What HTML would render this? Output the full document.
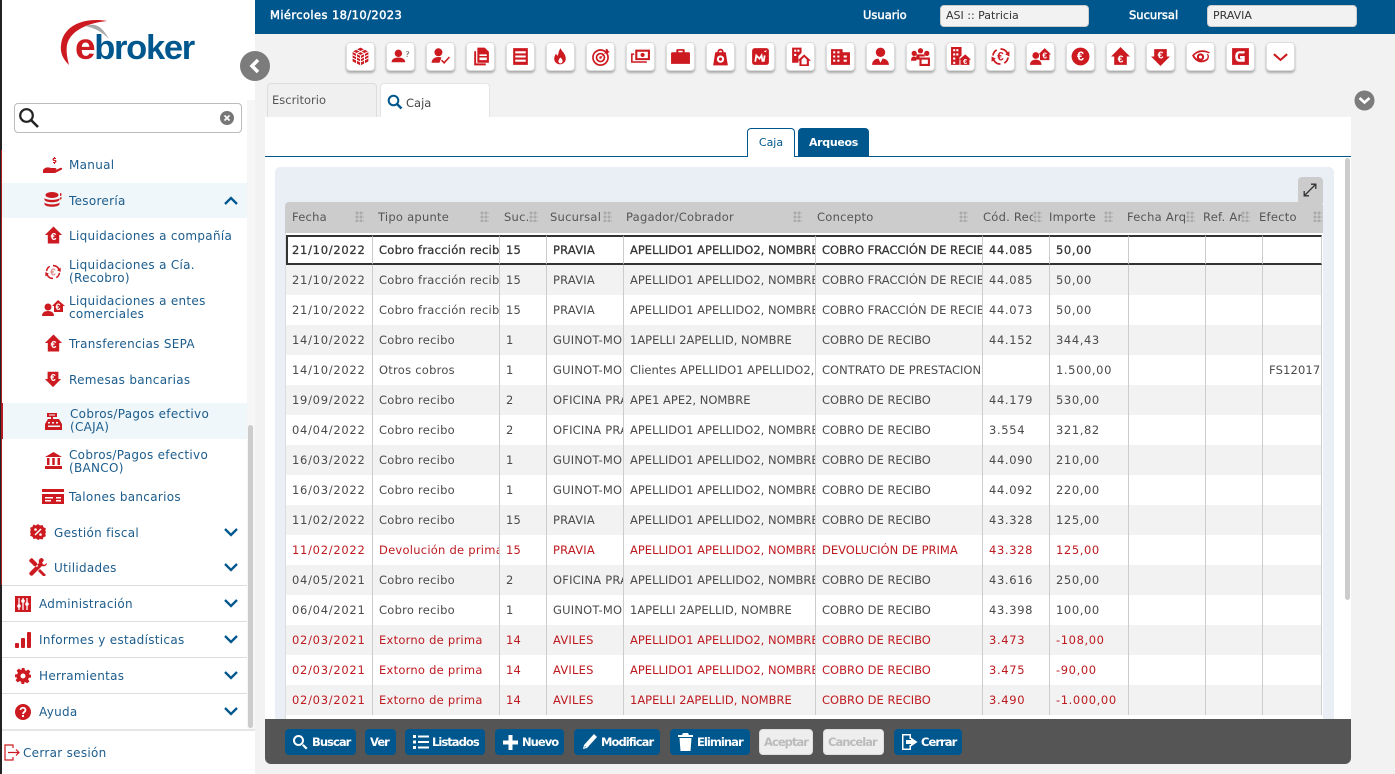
<!DOCTYPE html>
<html lang="es"><head><meta charset="utf-8"><title>Caja</title>
<style>
*{box-sizing:border-box}
html,body{margin:0;padding:0;width:1395px;height:774px;overflow:hidden;background:#f2f2f2;font-family:"DejaVu Sans","Liberation Sans",sans-serif;font-size:11.5px;color:#444}
.a{position:absolute}
#side{left:0;top:0;width:255px;height:774px;background:#fff;border-left:2px solid #222}
.m{position:absolute;color:#1c5c8c;font-size:12px;line-height:13px;white-space:nowrap;margin-top:1px;letter-spacing:.3px}
.ic{position:absolute}
.chev{position:absolute;left:224px;width:14px;height:9px}
.sep{position:absolute;left:2px;width:245px;height:1px;background:#ddd}
.tb{position:absolute;top:42px;width:29px;height:29px;background:#fff;border:1px solid #ddd;border-radius:4px;box-shadow:0 2px 2px #aaa}
.tb svg{position:absolute;left:3px;top:3px;width:21px;height:21px;fill:#cc1a20}
.eu{font:bold 10px "Liberation Sans",sans-serif;fill:#fff;text-anchor:middle}
.hd{position:absolute;top:210px;font-size:11.5px;color:#555;white-space:nowrap;overflow:hidden;line-height:14px;letter-spacing:.25px}
.gr{position:absolute;top:211px;width:9px;height:11px;background-image:radial-gradient(#aaa 0 1.4px,transparent 1.6px);background-size:4px 4px}
table{position:absolute;left:286px;top:235px;width:1036px;border-collapse:separate;border-spacing:0;table-layout:fixed}
td{height:30px;padding:0 0 0 6px;white-space:nowrap;overflow:hidden;border-right:1px solid #ccc;font-size:11.5px;color:#4a4a4a;letter-spacing:.15px}
td:nth-child(1){letter-spacing:.72px}
td:nth-child(2){letter-spacing:.25px}
td:nth-child(4){letter-spacing:.2px}
td:nth-child(7){letter-spacing:.65px}
td:nth-child(8){letter-spacing:.6px}
td:nth-child(5),td:nth-child(6){letter-spacing:0}
tr:nth-child(even) td{background:#f2f2f2}
tr:nth-child(odd) td{background:#fff}
tr.r td{color:#bd1a20}
tr.s td{color:#333;border-top:2px solid #333;border-bottom:2px solid #333;background:#fff;-webkit-text-stroke:.25px #333}
.btn{position:absolute;top:729px;height:26px;background:#00578e;border-radius:4px;color:#fff;font-size:11.5px;font-weight:bold;line-height:26px;white-space:nowrap;letter-spacing:-.95px}
.btn svg{position:absolute;fill:#fff}
.btn span{position:absolute;top:0}
.dis{background:#eee;color:#bbb;border:1px solid #ddd;line-height:24px}
</style></head><body>

<div class="a" style="left:255px;top:0;width:1140px;height:34px;background:#00578e"></div>
<div class="a" style="left:270px;top:8px;color:#fff;font-size:11.5px;letter-spacing:.4px;-webkit-text-stroke:.45px #fff">Miércoles 18/10/2023</div>
<div class="a" style="left:863px;top:8px;color:#fff;font-size:11.5px;-webkit-text-stroke:.45px #fff">Usuario</div>
<div class="a" style="left:940px;top:5px;width:149px;height:22px;background:#f2f2f2;border:1px solid #ccc;border-radius:4px;padding:3px 0 0 5px;font-size:11px;color:#333">ASI :: Patricia</div>
<div class="a" style="left:1129px;top:8px;color:#fff;font-size:11.5px;-webkit-text-stroke:.45px #fff">Sucursal</div>
<div class="a" style="left:1207px;top:5px;width:150px;height:22px;background:#f2f2f2;border:1px solid #ccc;border-radius:4px;padding:3px 0 0 5px;font-size:11px;color:#333">PRAVIA</div>

<!-- toolbar -->
<div class="tb" style="left:346px"><svg viewBox="0 0 20 20"><path d="M10 1.500l7.500 3.800v9.400L10 18.500l-7.500-3.800V5.300z"/><path d="M2.500 5.300L10 9l7.500-3.700M10 9v9.500M6.200 3.400L13.800 7.200M13.800 3.400L6.200 7.200M2.500 8.400L10 12.200l7.500-3.800M2.500 11.500L10 15.300l7.500-3.800M6.200 7.200v9.400M13.800 7.200v9.400" fill="none" stroke="#fff" stroke-width=".9"/></svg></div>
<div class="tb" style="left:386px"><svg viewBox="0 0 20 20"><circle cx="8" cy="7" r="3.500"/><path d="M1.500 15.500c0-3 3-4.500 6.500-4.500s6.500 1.500 6.500 4.500z"/><path d="M15 6c.3-1.600 3.300-1.500 3.300.2 0 1.300-1.500 1.200-1.500 2.600h-1c0-1.800 1.500-1.800 1.500-2.700 0-.8-1.300-.8-1.400 0zM15.800 9.500h1v1h-1z" fill="#777"/></svg></div>
<div class="tb" style="left:426px"><svg viewBox="0 0 20 20"><circle cx="8" cy="6" r="3.800"/><path d="M1.500 16c0-3.500 3-5.500 6.500-5.500 1 0 2 .2 3 .5L9 16z"/><path d="M11 13.500l2.500 2.500 5-5.500" fill="none" stroke="#cc1a20" stroke-width="1.500"/></svg></div>
<div class="tb" style="left:466px"><svg viewBox="0 0 20 20"><path d="M7 1.500h7l4 4V16H7zM9 8v1.500h7V8zm0 3v2.500h7V11z" fill-rule="evenodd"/><path d="M4 5h1.800v11.500H15V18.500H4z"/></svg></div>
<div class="tb" style="left:506px"><svg viewBox="0 0 20 20"><path d="M3 2h14v16H3zm2 3v2h10V5zm0 4v2h10V9zm0 4v2h10v-2z" fill-rule="evenodd"/></svg></div>
<div class="tb" style="left:546px"><svg viewBox="0 0 20 20"><path d="M10 2c1 3 5 5 5 10a5.500 5.500 0 0 1-11 0c0-2 1-4 2-5 0 2 1 2 1.500 2C8 7 8.500 4 10 2zm0 9c-1 1-2 2-2 3.500a2 2 0 0 0 4 0c0-1.500-1-2.500-2-3.500z" fill-rule="evenodd"/></svg></div>
<div class="tb" style="left:586px"><svg viewBox="0 0 20 20"><circle cx="10" cy="11" r="7.200" fill="none" stroke="#cc1a20" stroke-width="1.600"/><circle cx="10" cy="11" r="3.800" fill="none" stroke="#cc1a20" stroke-width="1.600"/><circle cx="10" cy="11" r="1.200"/><path d="M10 11l5-5.500V2.500l2 1 .5 1.500 1.500.5-2.500 1.500-2.800.3-3 4z"/></svg></div>
<div class="tb" style="left:626px"><svg viewBox="0 0 20 20"><path d="M5 3.500h14v10H5zm2 2v6h10v-6zm5 1a2 2 0 1 1 0 4 2 2 0 0 1 0-4z" fill-rule="evenodd"/><path d="M1 7h3v1.500H2.500v6H16V16H1z"/></svg></div>
<div class="tb" style="left:666px"><svg viewBox="0 0 20 20"><path d="M7 3h6a1 1 0 0 1 1 1v2h4a1 1 0 0 1 1 1v10H1V7a1 1 0 0 1 1-1h4V4a1 1 0 0 1 1-1zm1 1.500V6h4V4.500z" fill-rule="evenodd"/></svg></div>
<div class="tb" style="left:706px"><svg viewBox="0 0 20 20"><path d="M5 6h2c0-4.500 6-4.500 6 0h2l2 12.500H3zm3.500 0h3c0-2.300-3-2.300-3 0zm1.500 3a3.500 3.500 0 1 0 0 7 3.500 3.500 0 0 0 0-7zm0 2a1.500 1.500 0 1 1 0 3 1.500 1.500 0 0 1 0-3z" fill-rule="evenodd"/></svg></div>
<div class="tb" style="left:746px"><svg viewBox="0 0 20 20"><rect x="2" y="2" width="16" height="16" rx="2.500"/><path d="M5 15l1-6 3 3 2-3 1 6M13 15l1-6" fill="none" stroke="#fff" stroke-width="1.700"/><path d="M13 5l3-1-1 2z" fill="#fff"/></svg></div>
<div class="tb" style="left:786px"><svg viewBox="0 0 20 20"><path d="M2 1.500h9v5l-3 3v6.500H2zm2 2v2h2v-2zm3 0v2h2v-2zm-3 4v2h2v-2z" fill-rule="evenodd"/><path d="M13.500 8L20 14h-2v5H9v-5H7zm0 2.500L11 13v4.500h5V13z" fill-rule="evenodd"/></svg></div>
<div class="tb" style="left:826px"><svg viewBox="0 0 20 20"><path d="M1 3h11v3h7v12H1zm2 2v2h2V5zm4 0v2h2V5zM3 9v2h2V9zm4 0v2h2V9zm6 0v2h3V9zM3 13v2h2v-2zm4 0v2h2v-2zm6 0v2h3v-2z" fill-rule="evenodd"/></svg></div>
<div class="tb" style="left:866px"><svg viewBox="0 0 20 20"><circle cx="10" cy="6" r="4.500"/><path d="M2 18c0-4 3-6 6-6l2 4 2-4c3 0 6 2 6 6z"/></svg></div>
<div class="tb" style="left:906px"><svg viewBox="0 0 20 20"><circle cx="4" cy="7" r="2.500"/><circle cx="10" cy="4.500" r="2.500"/><circle cx="16" cy="7" r="2.500"/><path d="M1 14c0-3 1-4 3-4 1 0 2 1 2 1v3zM6 8h8v2H9v3H6zM9 11h10v8H9zm2 2v4h6v-4z" fill-rule="evenodd"/></svg></div>
<div class="tb" style="left:946px"><svg viewBox="0 0 20 20"><path d="M1 1h10v8l-2 2v7H1zm2 2v2h2V3zm3 0v2h2V3zM3 7v2h2V7zm3 0v2h2V7zm-3 4v2h2v-2zm0 4v2h2v-2z" fill-rule="evenodd"/><path d="M14.500 8L20 13h-1.500v5H10v-5H8.500z"/><text class="eu" x="14.500" y="17" style="font-size:7px">€</text></svg></div>
<div class="tb" style="left:986px"><svg viewBox="0 0 20 20"><path d="M10 2a8 8 0 0 1 7 4l1.500-1v5l-4-2 1.200-.8A6.300 6.300 0 0 0 10 3.700zM10 18a8 8 0 0 1-7-4l-1.500 1v-5l4 2-1.200.8A6.300 6.300 0 0 0 10 16.300zM2 9a8 8 0 0 1 4-6l.8 1.400A6.300 6.300 0 0 0 3.700 9zM18 11a8 8 0 0 1-4 6l-.8-1.400a6.300 6.300 0 0 0 3.100-4.600z"/><text class="eu" x="10" y="14" style="fill:#cc1a20;font-size:11px">€</text></svg></div>
<div class="tb" style="left:1026px"><svg viewBox="0 0 20 20"><circle cx="5.500" cy="9" r="3.200"/><path d="M0 18c0-3 2-5 5.500-5s5.500 2 5.500 5z"/><path d="M14 2l6 6h-1.500v5.500h-9V8H8z"/><text class="eu" x="14" y="12" style="font-size:8px">€</text></svg></div>
<div class="tb" style="left:1066px"><svg viewBox="0 0 20 20"><circle cx="10" cy="10" r="8.500"/><text class="eu" x="10" y="14" style="font-size:12px">€</text></svg></div>
<div class="tb" style="left:1106px"><svg viewBox="0 0 20 20"><path d="M10 1l9 9h-3v8H4v-8H1z"/><text class="eu" x="10" y="15.500" style="font-size:10px">€</text></svg></div>
<div class="tb" style="left:1146px"><svg viewBox="0 0 20 20"><path d="M10 19l-9-9h3V3h12v7h3z"/><text class="eu" x="10" y="12" style="font-size:10px">€</text></svg></div>
<div class="tb" style="left:1186px"><svg viewBox="0 0 20 20"><path d="M2 9c5-6 11-6 17-3l-1 1C13 5 8 5 4 9c3 5 8 6 12 3 1-1 1-3 0-4l1-.5c2 2 1 6-2 7C10 17 5 15 2 9z"/><path d="M10 7a3.500 3.500 0 1 0 0 7 3.500 3.500 0 0 0 0-7zm0 2a1.500 1.500 0 1 1 0 3 1.500 1.500 0 0 1 0-3z" fill-rule="evenodd"/></svg></div>
<div class="tb" style="left:1226px"><svg viewBox="0 0 20 20"><path d="M2 2h16v16H2zm12 4.500V5H9C6 5 5 7.500 5 10s1 5 4 5h5V9.500H9.500V12h1.700v.500H9c-1.200 0-1.500-1.300-1.500-2.500S7.800 7 9 7h3v.5z" fill-rule="evenodd"/></svg></div>
<div class="tb" style="left:1266px"><svg viewBox="0 0 20 20"><path d="M4.500 7L10 12l5.500-5 1.500 1.500-7 6-7-6z"/></svg></div>

<!-- tabs -->
<div class="a" style="left:267px;top:83px;width:110px;height:35px;background:#f0f0f0;border:1px solid #ddd;border-bottom:0;border-radius:4px 4px 0 0;padding:9px 0 0 4px;color:#555">Escritorio</div>
<div class="a" style="left:380px;top:83px;width:110px;height:35px;background:#fff;border:1px solid #e4e4e4;border-bottom:0;border-radius:4px 4px 0 0;padding:12px 0 0 25px;color:#444">Caja</div>
<svg class="a" style="left:387px;top:94px" width="16" height="16" viewBox="0 0 16 16"><circle cx="6.500" cy="6.500" r="4.800" fill="none" stroke="#00578e" stroke-width="2"/><path d="M10 10l4.500 4.500" stroke="#00578e" stroke-width="2.500"/></svg>
<svg class="a" style="left:1354px;top:90px" width="21" height="21" viewBox="0 0 21 21"><circle cx="10.500" cy="10.500" r="10" fill="#7c7c7c"/><path d="M5.500 8l5 4.500 5-4.500" fill="none" stroke="#fff" stroke-width="2.600"/></svg>

<!-- content -->
<div class="a" style="left:265px;top:117px;width:1086px;height:604px;background:#fff"></div>
<div class="a" style="left:265px;top:156px;width:1086px;height:1px;background:#00578e"></div>
<div class="a" style="left:747px;top:128px;width:48px;height:29px;background:#fff;border:1px solid #00578e;border-bottom:0;border-radius:4px 4px 0 0;text-align:center;line-height:27px;color:#00578e;font-size:11px">Caja</div>
<div class="a" style="left:798px;top:128px;width:71px;height:28px;background:#00578e;border-radius:4px 4px 0 0;text-align:center;line-height:29px;color:#fff;font-size:11px;font-weight:bold;letter-spacing:-.3px">Arqueos</div>
<div class="a" style="left:1345px;top:158px;width:5px;height:442px;background:#ccc;border-radius:3px"></div>
<div class="a" style="left:275px;top:167px;width:1059px;height:552px;background:#e9eff4;border-radius:5px 5px 0 0"></div>
<div class="a" style="left:1298px;top:177px;width:25px;height:26px;background:#ccc;border-radius:4px 4px 0 0"></div>
<svg class="a" style="left:1303px;top:183px" width="14" height="14" viewBox="0 0 14 14" fill="none" stroke="#333" stroke-width="1.300"><path d="M1.500 12.500l11-11M8 1.200h4.800V6M1.200 8v4.800H6"/></svg>
<div class="a" style="left:285px;top:202px;width:1038px;height:31px;background:#ccc;border-radius:4px 4px 0 0"></div>
<div class="a" style="left:285px;top:233px;width:1038px;height:486px;background:#fff"></div>

<div class="hd" style="left:292px">Fecha</div><div class="gr" style="left:355px"></div>
<div class="hd" style="left:378px">Tipo apunte</div><div class="gr" style="left:480px"></div>
<div class="hd" style="left:504px;width:25px">Suc.</div><div class="gr" style="left:529px"></div>
<div class="hd" style="left:550px;width:50px">Sucursal</div><div class="gr" style="left:603px"></div>
<div class="hd" style="left:626px">Pagador/Cobrador</div><div class="gr" style="left:793px"></div>
<div class="hd" style="left:817px">Concepto</div><div class="gr" style="left:959px"></div>
<div class="hd" style="left:983px;width:50px">Cód. Rec</div><div class="gr" style="left:1033px"></div>
<div class="hd" style="left:1049px">Importe</div><div class="gr" style="left:1104px"></div>
<div class="hd" style="left:1127px;width:59px">Fecha Arq</div><div class="gr" style="left:1186px"></div>
<div class="hd" style="left:1203px;width:39px">Ref. Ar</div><div class="gr" style="left:1241px"></div>
<div class="hd" style="left:1259px">Efecto</div><div class="gr" style="left:1313px"></div>

<table>
<colgroup><col style="width:87px"><col style="width:127px"><col style="width:47px"><col style="width:77px"><col style="width:192px"><col style="width:167px"><col style="width:67px"><col style="width:79px"><col style="width:77px"><col style="width:57px"><col style="width:59px"></colgroup>
<tr class="s"><td>21/10/2022</td><td>Cobro fracción recibo</td><td>15</td><td>PRAVIA</td><td>APELLIDO1 APELLIDO2, NOMBRE</td><td>COBRO FRACCIÓN DE RECIBO</td><td>44.085</td><td>50,00</td><td></td><td></td><td></td></tr>
<tr><td>21/10/2022</td><td>Cobro fracción recibo</td><td>15</td><td>PRAVIA</td><td>APELLIDO1 APELLIDO2, NOMBRE</td><td>COBRO FRACCIÓN DE RECIBO</td><td>44.085</td><td>50,00</td><td></td><td></td><td></td></tr>
<tr><td>21/10/2022</td><td>Cobro fracción recibo</td><td>15</td><td>PRAVIA</td><td>APELLIDO1 APELLIDO2, NOMBRE</td><td>COBRO FRACCIÓN DE RECIBO</td><td>44.073</td><td>50,00</td><td></td><td></td><td></td></tr>
<tr><td>14/10/2022</td><td>Cobro recibo</td><td>1</td><td>GUINOT-MO</td><td>1APELLI 2APELLID, NOMBRE</td><td>COBRO DE RECIBO</td><td>44.152</td><td>344,43</td><td></td><td></td><td></td></tr>
<tr><td>14/10/2022</td><td>Otros cobros</td><td>1</td><td>GUINOT-MO</td><td>Clientes APELLIDO1 APELLIDO2, NOMBRE</td><td>CONTRATO DE PRESTACION</td><td></td><td>1.500,00</td><td></td><td></td><td>FS12017</td></tr>
<tr><td>19/09/2022</td><td>Cobro recibo</td><td>2</td><td>OFICINA PRAVIA</td><td>APE1 APE2, NOMBRE</td><td>COBRO DE RECIBO</td><td>44.179</td><td>530,00</td><td></td><td></td><td></td></tr>
<tr><td>04/04/2022</td><td>Cobro recibo</td><td>2</td><td>OFICINA PRAVIA</td><td>APELLIDO1 APELLIDO2, NOMBRE</td><td>COBRO DE RECIBO</td><td>3.554</td><td>321,82</td><td></td><td></td><td></td></tr>
<tr><td>16/03/2022</td><td>Cobro recibo</td><td>1</td><td>GUINOT-MO</td><td>APELLIDO1 APELLIDO2, NOMBRE</td><td>COBRO DE RECIBO</td><td>44.090</td><td>210,00</td><td></td><td></td><td></td></tr>
<tr><td>16/03/2022</td><td>Cobro recibo</td><td>1</td><td>GUINOT-MO</td><td>APELLIDO1 APELLIDO2, NOMBRE</td><td>COBRO DE RECIBO</td><td>44.092</td><td>220,00</td><td></td><td></td><td></td></tr>
<tr><td>11/02/2022</td><td>Cobro recibo</td><td>15</td><td>PRAVIA</td><td>APELLIDO1 APELLIDO2, NOMBRE</td><td>COBRO DE RECIBO</td><td>43.328</td><td>125,00</td><td></td><td></td><td></td></tr>
<tr class="r"><td>11/02/2022</td><td>Devolución de prima</td><td>15</td><td>PRAVIA</td><td>APELLIDO1 APELLIDO2, NOMBRE</td><td>DEVOLUCIÓN DE PRIMA</td><td>43.328</td><td>125,00</td><td></td><td></td><td></td></tr>
<tr><td>04/05/2021</td><td>Cobro recibo</td><td>2</td><td>OFICINA PRAVIA</td><td>APELLIDO1 APELLIDO2, NOMBRE</td><td>COBRO DE RECIBO</td><td>43.616</td><td>250,00</td><td></td><td></td><td></td></tr>
<tr><td>06/04/2021</td><td>Cobro recibo</td><td>1</td><td>GUINOT-MO</td><td>1APELLI 2APELLID, NOMBRE</td><td>COBRO DE RECIBO</td><td>43.398</td><td>100,00</td><td></td><td></td><td></td></tr>
<tr class="r"><td>02/03/2021</td><td>Extorno de prima</td><td>14</td><td>AVILES</td><td>APELLIDO1 APELLIDO2, NOMBRE</td><td>COBRO DE RECIBO</td><td>3.473</td><td>-108,00</td><td></td><td></td><td></td></tr>
<tr class="r"><td>02/03/2021</td><td>Extorno de prima</td><td>14</td><td>AVILES</td><td>APELLIDO1 APELLIDO2, NOMBRE</td><td>COBRO DE RECIBO</td><td>3.475</td><td>-90,00</td><td></td><td></td><td></td></tr>
<tr class="r"><td>02/03/2021</td><td>Extorno de prima</td><td>14</td><td>AVILES</td><td>1APELLI 2APELLID, NOMBRE</td><td>COBRO DE RECIBO</td><td>3.490</td><td>-1.000,00</td><td></td><td></td><td></td></tr>
</table>
<div class="a" style="left:286px;top:235px;width:2px;height:30px;background:#333"></div>
<div class="a" style="left:285px;top:233px;width:1px;height:486px;background:#ddd"></div>

<!-- bottom bar -->
<div class="a" style="left:265px;top:719px;width:1086px;height:45px;background:#555;border-radius:0 0 6px 6px"></div>
<div class="btn" style="left:285px;width:71px"><svg style="left:7px;top:5px" width="16" height="16" viewBox="0 0 16 16"><path d="M6.500 1a5.500 5.500 0 1 1 0 11 5.500 5.500 0 0 1 0-11zm0 2a3.500 3.500 0 1 0 0 7 3.500 3.500 0 0 0 0-7z" fill-rule="evenodd"/><path d="M10 11.500l1.500-1.500 4 4-1.500 1.500z"/></svg><span style="left:27px">Buscar</span></div>
<div class="btn" style="left:365px;width:31px"><span style="left:5px">Ver</span></div>
<div class="btn" style="left:405px;width:80px"><svg style="left:8px;top:6px" width="16" height="14" viewBox="0 0 16 14"><path d="M0 0h3v3H0zM0 5.500h3v3H0zM0 11h3v3H0zM5 .500h11v2H5zM5 6h11v2H5zM5 11.500h11v2H5z"/></svg><span style="left:27px">Listados</span></div>
<div class="btn" style="left:495px;width:69px"><svg style="left:8px;top:6px" width="15" height="15" viewBox="0 0 15 15"><path d="M5.500 0h4v5.500H15v4H9.500V15h-4V9.500H0v-4h5.500z"/></svg><span style="left:27px">Nuevo</span></div>
<div class="btn" style="left:574px;width:86px"><svg style="left:7px;top:4px" width="17" height="18" viewBox="0 0 17 18"><path d="M13 1l3 3-10 11-4 1 1-4zM4 13l-.6 1.600L5 14z"/></svg><span style="left:27px">Modificar</span></div>
<div class="btn" style="left:670px;width:80px"><svg style="left:8px;top:4px" width="15" height="18" viewBox="0 0 15 18"><path d="M5 0h5l1 2h4v2H0V2h4zM1.500 5h12l-1 13h-10z"/></svg><span style="left:27px">Eliminar</span></div>
<div class="btn dis" style="left:759px;width:54px"><span style="left:4px">Aceptar</span></div>
<div class="btn dis" style="left:823px;width:61px"><span style="left:4px">Cancelar</span></div>
<div class="btn" style="left:894px;width:68px"><svg style="left:8px;top:5px" width="16" height="16" viewBox="0 0 16 16"><path d="M0 0h9v5H7.500V1.500h-6v13h6V11H9v5H0z"/><path d="M9 3.500L15.500 8 9 12.500V10H4V6h5z"/></svg><span style="left:27px">Cerrar</span></div>

<!-- sidebar -->
<div id="side" class="a"></div>
<div class="a" style="left:247px;top:100px;width:8px;height:630px;background:#f6f6f6"></div>
<div class="a" style="left:248px;top:425px;width:5px;height:303px;background:#ccc;border-radius:3px"></div>
<div class="a" style="left:1px;top:150px;width:1px;height:435px;background:#b01c22"></div>

<svg class="a" style="left:55px;top:15px" width="60" height="55" viewBox="0 0 60 55"><path d="M52 6C30 2 8 10 6 30c-1 8 2 14 8 20-2-8-3-14-2-20C15 16 32 8 52 6z" fill="#cc1a20"/><path d="M30 11c10-3 16-1 24 13-7-7-14-11-24-13z" fill="#a9a9a9"/></svg>
<div class="a" style="left:75px;top:26px;font-family:'Liberation Sans',sans-serif;font-weight:bold;font-size:34.500px;letter-spacing:-1.300px;line-height:42px;color:#00578e"><span style="color:#cc1a20;font-size:37px">e</span>broker</div>

<div class="a" style="left:14px;top:103px;width:228px;height:30px;background:#fff;border:1px solid #bbb;border-radius:4px"></div>
<svg class="a" style="left:18px;top:107px" width="22" height="22" viewBox="0 0 22 22"><circle cx="8.500" cy="8.500" r="6.300" fill="none" stroke="#222" stroke-width="2.200"/><path d="M13 13l7 7" stroke="#222" stroke-width="2.600"/></svg>
<svg class="a" style="left:220px;top:111px" width="14" height="14" viewBox="0 0 14 14"><circle cx="7" cy="7" r="7" fill="#777"/><path d="M4.500 4.500l5 5m0-5l-5 5" stroke="#fff" stroke-width="1.600"/></svg>

<div class="a" style="left:2px;top:183px;width:245px;height:35px;background:#eff7fb"></div>
<div class="a" style="left:2px;top:403px;width:245px;height:36px;background:#eff7fb"></div>
<div class="a" style="left:2px;top:403px;width:1px;height:36px;background:#b01c22"></div>

<svg class="ic" style="left:43px;top:156px" width="20" height="18" viewBox="0 0 20 18" fill="#cc1a20"><path d="M0 14c2-3 5-3 8-2h4c2 0 2 2 0 2H9h4l4-2c2-1 3 1 1 2l-6 3H0z"/><path d="M11 1v1c-2 0-2 3 0 3s1 1 0 1l-1 0v1h1v1h1V7c2-1 2-3 0-3s-1-1 0-1h1V2h-1V1z"/></svg>
<div class="m" style="left:69px;top:158px">Manual</div>
<svg class="ic" style="left:44px;top:191px" width="18" height="18" viewBox="0 0 18 18" fill="#cc1a20"><ellipse cx="8" cy="4" rx="6.500" ry="3"/><path d="M.5 7c2 2.500 13 2.500 15 0v2c-2 3-13 3-15 0zM.5 11.500c2 2.500 13 2.500 15 0v2c-2 3-13 3-15 0z"/><path d="M16 2l1.500.5v2L16 5zM16 6.500l1.500-.5v2l-1.500.7z"/></svg>
<div class="m" style="left:69px;top:194px">Tesorería</div>
<svg class="chev" style="top:196px" viewBox="0 0 14 9"><path d="M1 8l6-6 6 6" fill="none" stroke="#00578e" stroke-width="2.300"/></svg>

<svg class="ic" style="left:44px;top:225px" width="19" height="20" viewBox="0 0 20 20" fill="#cc1a20"><path d="M10 1l9 9h-3v9H4v-9H1z"/><text class="eu" x="10" y="15.500" style="font-size:11px">€</text></svg>
<div class="m" style="left:69px;top:229px">Liquidaciones a compañía</div>
<svg class="ic" style="left:44px;top:263px" width="18" height="18" viewBox="0 0 20 20" fill="#cc1a20"><path d="M10 2a8 8 0 0 1 7 4l1.500-1v5l-4-2 1.200-.8A6.300 6.300 0 0 0 10 3.700zM10 18a8 8 0 0 1-7-4l-1.500 1v-5l4 2-1.200.8A6.300 6.300 0 0 0 10 16.300zM2 9a8 8 0 0 1 4-6l.8 1.400A6.300 6.300 0 0 0 3.700 9zM18 11a8 8 0 0 1-4 6l-.8-1.400a6.300 6.300 0 0 0 3.100-4.600z"/><text class="eu" x="10" y="14" style="fill:#d88;font-size:11px">€</text></svg>
<div class="m" style="left:69px;top:258px">Liquidaciones a Cía.<br>(Recobro)</div>
<svg class="ic" style="left:41px;top:298px" width="24" height="20" viewBox="0 0 24 20" fill="#cc1a20"><circle cx="7" cy="9" r="3.500"/><path d="M1 18c0-3 2-5 6-5s6 2 6 5z"/><path d="M17 2l7 6h-2v6h-9V8h-2z"/><text class="eu" x="17" y="12" style="font-size:9px">€</text></svg>
<div class="m" style="left:69px;top:294px">Liquidaciones a entes<br>comerciales</div>
<svg class="ic" style="left:44px;top:333px" width="19" height="20" viewBox="0 0 20 20" fill="#cc1a20"><path d="M10 1l9 9h-3v9H4v-9H1z"/><text class="eu" x="10" y="15.500" style="font-size:11px">€</text></svg>
<div class="m" style="left:69px;top:337px">Transferencias SEPA</div>
<svg class="ic" style="left:44px;top:370px" width="18" height="18" viewBox="0 0 20 20" fill="#cc1a20"><path d="M10 19l-9-9h3V2h12v8h3z"/><text class="eu" x="10" y="12" style="font-size:11px">€</text></svg>
<div class="m" style="left:69px;top:373px">Remesas bancarias</div>
<svg class="ic" style="left:45px;top:412px" width="18" height="19" viewBox="0 0 18 19" fill="#cc1a20"><path d="M2 1h10v4H8v2h6l3 5v6H0v-6l3-5h3V5H2zm2 1.500V3.500h6V2.500zM3 10v1.500h2V10zm4 0v1.500h2V10zm4 0v1.500h2V10zM3 13.500V15h12v-1.500z" fill-rule="evenodd"/></svg>
<div class="m" style="left:70px;top:407px">Cobros/Pagos efectivo<br>(CAJA)</div>
<svg class="ic" style="left:45px;top:452px" width="17" height="17" viewBox="0 0 17 17" fill="#cc1a20"><path d="M8.500 0L17 5H0zM2 6h2.500v7H2zM7.250 6h2.500v7h-2.500zM12.500 6H15v7h-2.500zM0 14h17v3H0z"/></svg>
<div class="m" style="left:69px;top:448px">Cobros/Pagos efectivo<br>(BANCO)</div>
<svg class="ic" style="left:42px;top:489px" width="22" height="15" viewBox="0 0 22 15" fill="#cc1a20"><path d="M0 0h22v15H0zm0 3v2h22V3zm3 5v1.500h8V8zm11 0v1.500h5V8zM3 11v1.500h6V11zm11 0v1.500h5V11z" fill="#cc1a20" fill-rule="evenodd"/></svg>
<div class="m" style="left:69px;top:490px">Talones bancarios</div>

<svg class="ic" style="left:30px;top:524px" width="16" height="16" viewBox="0 0 16 16"><path d="M8 0l2 1.500 2.500-.5 1 2.300 2.300 1-.5 2.500L16 8l-.7 1.700.5 2.500-2.300 1-1 2.300-2.500-.5L8 16l-2-1.500-2.500.5-1-2.300-2.300-1 .5-2.500L0 8l.7-1.700-.5-2.500 2.300-1 1-2.300L6 1.500z" fill="#cc1a20"/><path d="M5 11l6-6" stroke="#fff" stroke-width="1.500"/><circle cx="5.500" cy="5.500" r="1.300" fill="#fff"/><circle cx="10.500" cy="10.500" r="1.300" fill="#fff"/></svg>
<div class="m" style="left:54px;top:526px">Gestión fiscal</div>
<svg class="chev" style="top:528px" viewBox="0 0 14 9"><path d="M1 1l6 6 6-6" fill="none" stroke="#00578e" stroke-width="2.300"/></svg>
<svg class="ic" style="left:29px;top:558px" width="18" height="18" viewBox="0 0 18 18" fill="#cc1a20"><path d="M1 1l2-1 5 5 1 3-1 1-3-1-5-5zM13 0c-2 0-4 2-3 5L1 14c-1 1-1 2 0 3s2 1 3 0l9-9c3 1 5-1 5-3l-3 2-2-2 2-3zM11 11l5 5c1 1 1 1 0 2s-1 1-2 0l-5-5z"/></svg>
<div class="m" style="left:54px;top:561px">Utilidades</div>
<svg class="chev" style="top:563px" viewBox="0 0 14 9"><path d="M1 1l6 6 6-6" fill="none" stroke="#00578e" stroke-width="2.300"/></svg>

<div class="sep" style="top:585px"></div>
<svg class="ic" style="left:15px;top:596px" width="16" height="16" viewBox="0 0 16 16"><rect width="16" height="16" fill="#cc1a20"/><path d="M4 2v12M8 2v12M12 2v12" stroke="#fff" stroke-width="1.300"/><circle cx="4" cy="10" r="1.800" fill="#fff"/><circle cx="8" cy="5" r="1.800" fill="#fff"/><circle cx="12" cy="8" r="1.800" fill="#fff"/></svg>
<div class="m" style="left:39px;top:597px">Administración</div>
<svg class="chev" style="top:599px" viewBox="0 0 14 9"><path d="M1 1l6 6 6-6" fill="none" stroke="#00578e" stroke-width="2.300"/></svg>
<div class="sep" style="top:621px"></div>
<svg class="ic" style="left:15px;top:632px" width="16" height="16" viewBox="0 0 16 16" fill="#cc1a20"><rect x="0" y="11" width="4" height="5" rx="1"/><rect x="6" y="6" width="4" height="10" rx="1"/><rect x="12" y="0" width="4" height="16" rx="1"/></svg>
<div class="m" style="left:39px;top:633px">Informes y estadísticas</div>
<svg class="chev" style="top:635px" viewBox="0 0 14 9"><path d="M1 1l6 6 6-6" fill="none" stroke="#00578e" stroke-width="2.300"/></svg>
<div class="sep" style="top:657px"></div>
<svg class="ic" style="left:15px;top:668px" width="16" height="16" viewBox="0 0 16 16" fill="#cc1a20"><path d="M6.500 0h3l.4 2.200 1.500.6 1.900-1.300 2.100 2.100-1.300 1.900.6 1.500L16 6.500v3l-2.300.4-.6 1.500 1.300 1.900-2.100 2.100-1.900-1.300-1.500.6L9.500 16h-3l-.4-2.300-1.500-.6-1.900 1.300-2.100-2.100 1.300-1.900-.6-1.500L0 9.500v-3l2.300-.4.6-1.500L1.600 2.700l2.100-2.100 1.900 1.300 1.500-.6zM8 5.500a2.500 2.500 0 1 0 0 5 2.500 2.500 0 0 0 0-5z" fill-rule="evenodd"/></svg>
<div class="m" style="left:39px;top:669px">Herramientas</div>
<svg class="chev" style="top:671px" viewBox="0 0 14 9"><path d="M1 1l6 6 6-6" fill="none" stroke="#00578e" stroke-width="2.300"/></svg>
<div class="sep" style="top:693px"></div>
<svg class="ic" style="left:15px;top:704px" width="16" height="16" viewBox="0 0 16 16"><circle cx="8" cy="8" r="8" fill="#cc1a20"/><path d="M5.500 6c0-3 5-3 5 0 0 2-2.500 2-2.500 4" fill="none" stroke="#fff" stroke-width="1.800"/><rect x="7" y="11" width="2" height="2" fill="#fff"/></svg>
<div class="m" style="left:39px;top:705px">Ayuda</div>
<svg class="chev" style="top:707px" viewBox="0 0 14 9"><path d="M1 1l6 6 6-6" fill="none" stroke="#00578e" stroke-width="2.300"/></svg>
<div class="a" style="left:2px;top:729px;width:253px;height:2px;background:#e6e6e6"></div>
<svg class="ic" style="left:4px;top:744px" width="16" height="17" viewBox="0 0 16 17" fill="none" stroke="#cc1a20" stroke-width="1.200"><path d="M9 4V1H1v15h8v-3M4 8.500h11M12 5.500l3 3-3 3"/></svg>
<div class="m" style="left:23px;top:746px">Cerrar sesión</div>

<svg class="a" style="left:240px;top:51px" width="30" height="30" viewBox="0 0 30 30"><circle cx="15" cy="15" r="15" fill="#7c7c7c"/><path d="M18 9l-6 6 6 6" fill="none" stroke="#fff" stroke-width="3.500"/></svg>
</body></html>
